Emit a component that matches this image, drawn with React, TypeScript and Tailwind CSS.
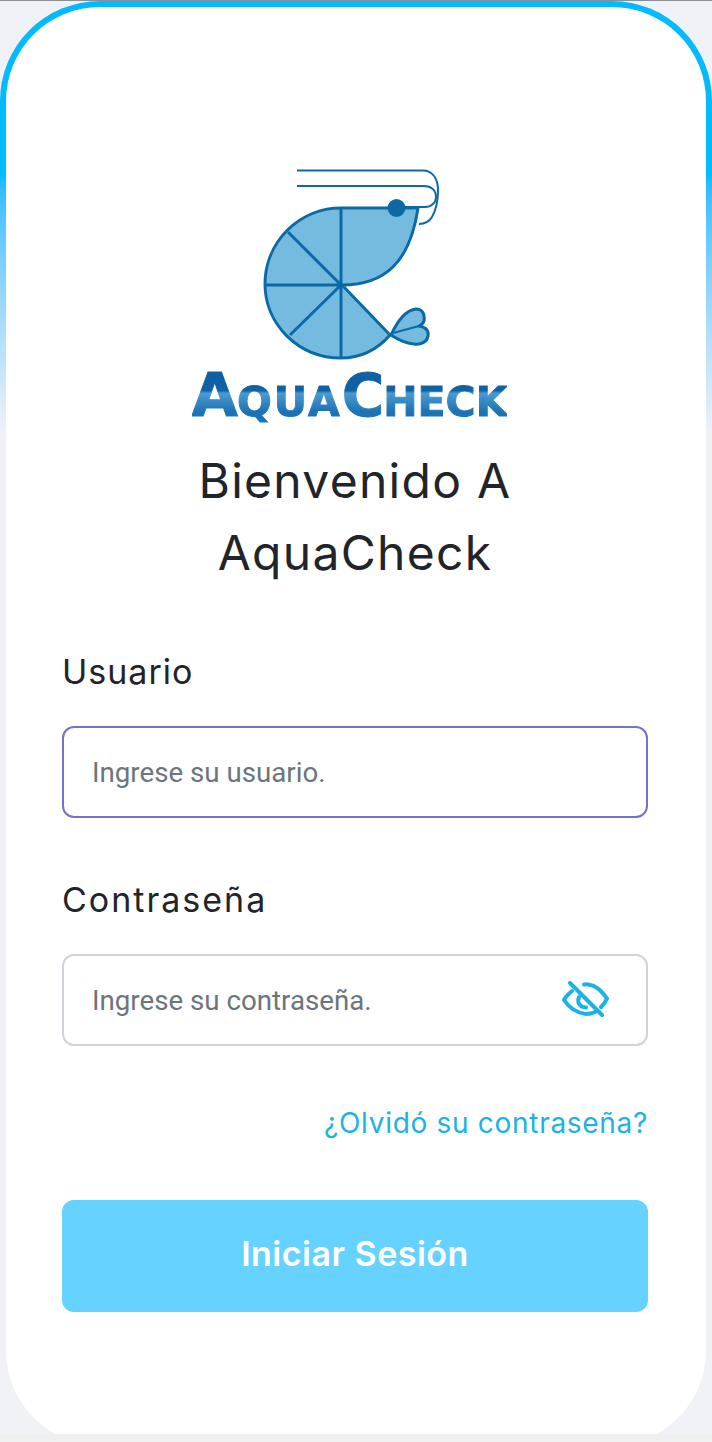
import React from "react";

function Logo() {
  const stroke = "#0b6aa5";
  return (
    <svg viewBox="255 165 200 198" className="h-[198px] w-[200px] shrink-0" fill="none">
      <path d="M297 170.500H423C432 170.500 438 178 438 190C438 200 436 210 432 217C429 222 425 224 419 224" stroke={stroke} strokeWidth="2" />
      <path d="M297 186H424C431 186 436 190 436 197C436 203 431 207 425 207H400" stroke={stroke} strokeWidth="2" />
      <path
        d="M418 208H341A76 76 0 0 0 265 284A76 74 0 0 0 341 358C360 358 377 350 390 335L342 285C385 285 410 262 418 208Z"
        fill="#74bbdf"
        stroke={stroke}
        strokeWidth="3"
        strokeLinejoin="round"
      />
      <path d="M341 208V358M266 285H341M288 232L341 285M290 335L341 285" stroke={stroke} strokeWidth="3" />
      <path
        d="M391 335C397 322 406 310 416 309C423 309 425 315 424 321C423 324 421 325 419 326C426 327 429 331 428 336C427 342 421 345 414 344C405 343 397 339 391 335Z"
        fill="#74bbdf"
        stroke={stroke}
        strokeWidth="3"
        strokeLinejoin="round"
      />
      <path d="M393 333L419 326" stroke={stroke} strokeWidth="2" />
      <circle cx="396.500" cy="208" r="9" fill={stroke} />
    </svg>
  );
}

function EyeOff() {
  return (
    <svg viewBox="0 0 48 38" className="h-[38px] w-[48px]" fill="none" stroke="#1db2e6" strokeWidth="4" strokeLinecap="round" strokeLinejoin="round">
      <path d="M22 3.500C24 3 25 3 26 3.500C33 4 38 8 45 17.500C44 20 42 23 39 26" />
      <path d="M10 10C7 12.500 4 15 2 19C8 28 15 32 24 33C27 33 30 32.500 33 31" />
      <path d="M17 16C15 21 17 26 24 26.500" />
      <path d="M8 2L40 34" />
    </svg>
  );
}

export default function App() {
  const head = "font-['Inter',sans-serif]";
  return (
    <div className="flex h-[1442px] w-[712px] flex-col overflow-hidden bg-[#f0f2f7]">
      <div className="h-[1px] shrink-0 bg-[#8a9094]" />
      <div className="h-[1433px] shrink-0 overflow-hidden">
        <div className="h-[1444px] rounded-[100px] bg-gradient-to-b from-[#00bbff] from-[12%] to-[#f0f2f7] to-[30%] p-[6px] pb-0">
          <div className="flex h-full flex-col items-center rounded-[94px] bg-white pl-[56px] pr-[58px] pt-[158px]">
            <Logo />
            <div className="mr-[11px] mt-[4px] flex h-[56px] items-baseline bg-[linear-gradient(180deg,#0f5fa3_0%,#0f62a6_42%,#4a9bd0_47%,#1c72b4_80%)] bg-clip-text font-['DejaVu_Sans',sans-serif] font-bold leading-[56px] text-transparent [-webkit-text-stroke:1px_transparent]">
              <span className="text-[60px] tracking-[-1px]">A</span>
              <span className="text-[41px] tracking-[2px]">QUA</span>
              <span className="text-[58px] tracking-[-1px]">C</span>
              <span className="text-[41px]">HECK</span>
            </div>
            <h1 className={`${head} mt-[22px] w-full text-center text-[48px] font-normal leading-[72px] tracking-[1.3px] text-[#212529]`}>
              Bienvenido A
              <br />
              AquaCheck
            </h1>
            <form className="mt-[59px] flex w-full flex-col">
              <label className={`${head} text-[34px] leading-[48px] tracking-[1px] text-[#212529]`}>Usuario</label>
              <input
                placeholder="Ingrese su usuario."
                className="mt-[30px] h-[92px] w-full rounded-[12px] border-2 border-[#7471cf] bg-white px-[28px] font-['Roboto',sans-serif] text-[27.7px] outline-none placeholder:text-[#6c757d]"
              />
              <label className={`${head} mt-[58px] text-[34px] leading-[48px] tracking-[2px] text-[#212529]`}>Contraseña</label>
              <div className="relative mt-[30px] h-[92px] w-full">
                <input
                  placeholder="Ingrese su contraseña."
                  className="h-full w-full rounded-[12px] border-2 border-[#ced4da] bg-white px-[28px] font-['Roboto',sans-serif] text-[27.7px] outline-none placeholder:text-[#6c757d]"
                />
                <span className="absolute right-[38px] top-[27px]">
                  <EyeOff />
                </span>
              </div>
              <a className={`${head} mt-[57px] self-end text-[28px] leading-[40px] tracking-[0.7px] text-[#1db2e6]`}>¿Olvidó su contraseña?</a>
              <button
                type="button"
                className={`${head} mt-[57px] h-[112px] w-full rounded-[12px] bg-[#66d2ff] pb-[6px] text-[34px] font-semibold tracking-[0.5px] text-white`}
              >
                Iniciar Sesión
              </button>
            </form>
          </div>
        </div>
      </div>
      <div className="flex-1 bg-[#f0f0f0]" />
    </div>
  );
}
